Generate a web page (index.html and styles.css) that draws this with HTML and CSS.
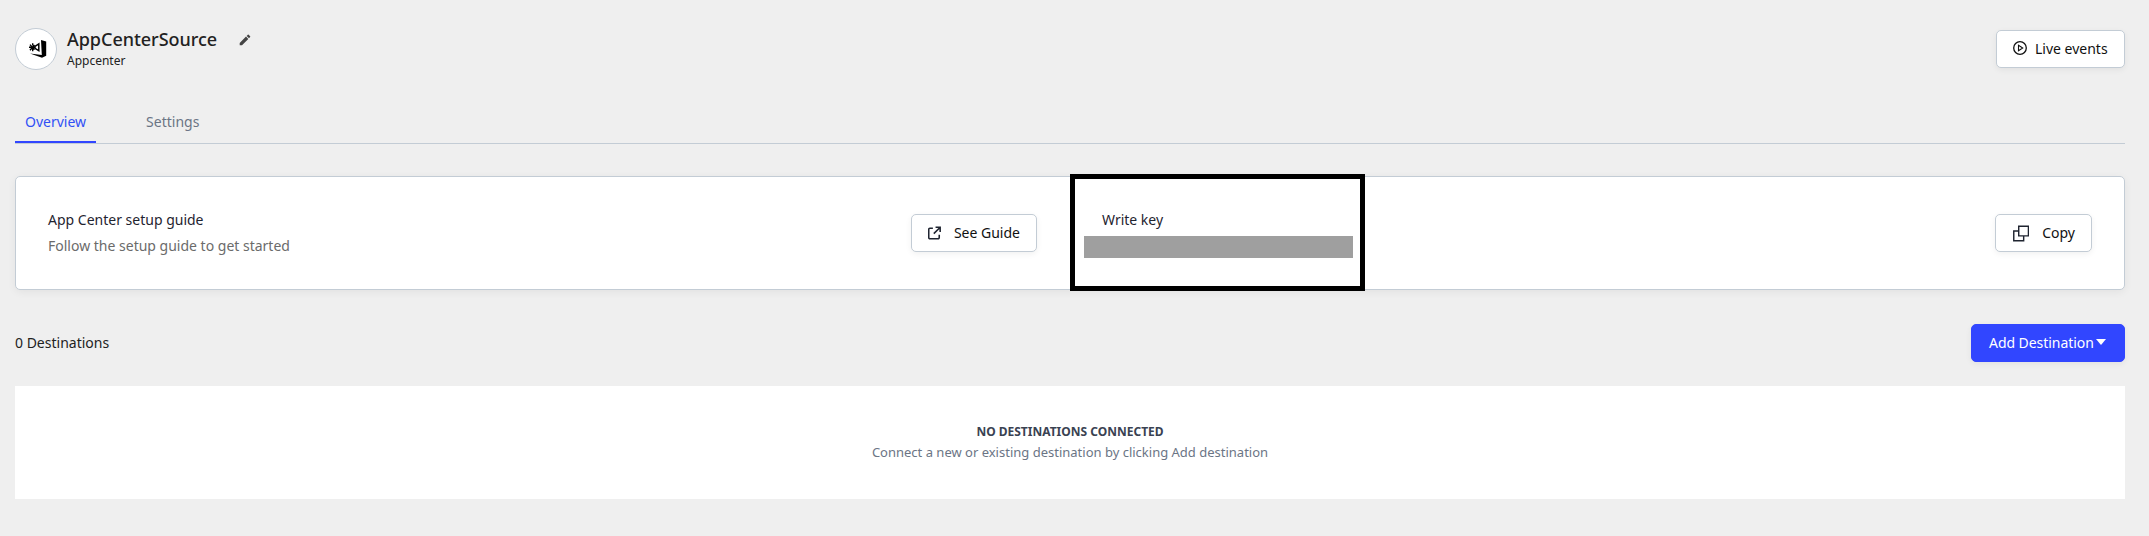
FILE: index.html
```html
<!DOCTYPE html>
<html lang="en">
<head>
<meta charset="utf-8">
<title>AppCenterSource</title>
<link rel="stylesheet" href="styles.css">
</head>
<body>
<main class="page">
  <header class="header">
    <div class="logo">
      <svg width="18" height="18" viewBox="0 0 18 18">
        <path d="M12 0 17.200 1.500V15.800L13 17.800 1 13.600 12.800 15z" fill="#000"/>
        <g fill="none" stroke="#000" stroke-width="1.500">
          <path d="M6 6.400 9.800 3.800V10.600L6 8.400z"/>
          <path d="M0 7.300h6M1 4.600 5.500 9.600M1 10.200 5.500 5M3.700 3.200v2.300M3.700 9v2.300" stroke-width="1.400"/>
        </g>
      </svg>
    </div>
    <div class="heading">
      <div class="title-row">
        <h1 class="title">AppCenterSource</h1>
        <svg class="pencil" width="12" height="12" viewBox="0 0 12 12"><path d="M.7 8.900v2.300H3l6.300-6.300L7 2.600zM7.700 1.900 10 4.200l1.100-1.100a.6.6 0 0 0 0-.9L9.700.8a.6.600 0 0 0-.9 0z" fill="#444"/></svg>
      </div>
      <p class="subtitle">Appcenter</p>
    </div>
    <button class="btn btn-live">
      <svg width="14" height="14" viewBox="0 0 14 14" fill="none" stroke="#111"><circle cx="7" cy="7" r="6.300" stroke-width="1.300"/><path d="M5.500 4.300v5.400L9.700 7z" stroke-width="1.100"/></svg>
      <span>Live events</span>
    </button>
  </header>

  <nav class="tabs">
    <a class="tab tab-active">Overview</a>
    <a class="tab">Settings</a>
  </nav>

  <section class="card">
    <div class="panel panel-guide">
      <div>
        <p class="panel-title">App Center setup guide</p>
        <p class="panel-text">Follow the setup guide to get started</p>
      </div>
      <button class="btn btn-guide">
        <svg width="14" height="14" viewBox="0 0 14 14" fill="none" stroke="#1f2430" stroke-width="1.700"><path d="M5.300 1.800H2a1.200 1.200 0 0 0-1.200 1.200v9A1.200 1.200 0 0 0 2 13.200h9a1.200 1.200 0 0 0 1.200-1.200V8.800M6.300 7.700 12.700 1.300M8.200.8h5v5"/></svg>
        <span>See Guide</span>
      </button>
    </div>
    <div class="panel">
      <div>
        <p class="panel-title">Write key</p>
        <div class="redacted"></div>
      </div>
      <button class="btn btn-copy">
        <svg width="17" height="17" viewBox="0 0 17 17" fill="none" stroke="#1f2430" stroke-width="1.500"><path d="M6 .8h10.200v10.200H6z"/><path d="M6 5.800H.8v10.400h10.400V11"/></svg>
        <span>Copy</span>
      </button>
      <div class="highlight"></div>
    </div>
  </section>

  <div class="toolbar">
    <span class="count">0 Destinations</span>
    <button class="btn btn-primary">
      <span>Add Destination</span>
      <svg width="10" height="6" viewBox="0 0 10 6"><path d="M0 0h10L5 6z" fill="#fff"/></svg>
    </button>
  </div>

  <section class="empty">
    <h2 class="empty-title">NO DESTINATIONS CONNECTED</h2>
    <p class="empty-text">Connect a new or existing destination by clicking Add destination</p>
  </section>
</main>
</body>
</html>
```
FILE: styles.css
```css
* { box-sizing: border-box; }

body {
  margin: 0;
  min-height: 536px;
  background: #efefef;
  color: #222;
  font: 14px/20px "Noto Sans", sans-serif;
}

h1, h2, p { margin: 0; }

.page { padding: 28px 24px 0 15px; }

.header {
  display: flex;
  align-items: center;
  height: 42px;
}

.logo {
  display: flex;
  align-items: center;
  justify-content: center;
  width: 42px;
  height: 42px;
  border: 1px solid #c3ccd5;
  border-radius: 50%;
  background: #fff;
}

.logo svg { margin-left: 3px; }

.heading { margin-left: 10px; }

.title-row {
  display: flex;
  align-items: center;
  gap: 22px;
}

.title {
  font-size: 18px;
  font-weight: 500;
  line-height: 22px;
  letter-spacing: -.04px;
  padding-bottom: 2px;
}

.subtitle {
  font-size: 12px;
  line-height: 18px;
}

.btn {
  display: flex;
  align-items: center;
  height: 38px;
  padding: 0 16px;
  border: 1px solid #c3ccd5;
  border-radius: 5px;
  background: #fff;
  box-shadow: 0 2px 6px rgba(0, 0, 0, .06);
  color: #111;
  font: inherit;
  white-space: nowrap;
}

.btn-live {
  width: 129px;
  margin-left: auto;
  gap: 8px;
}

.btn-live svg { margin-top: -2px; }

.btn-guide {
  width: 126px;
  gap: 13px;
}

.btn-copy {
  width: 97px;
  padding-left: 17px;
  gap: 13px;
}

.btn-primary {
  width: 154px;
  padding: 0 0 0 17px;
  gap: 2px;
  border-color: #3146ff;
  background: #3146ff;
  color: #fff;
  letter-spacing: -.05px;
}

.btn-primary svg { margin-top: -2px; }

.tabs {
  display: flex;
  gap: 40px;
  height: 44px;
  margin-top: 30px;
  border-bottom: 1px solid #c3ccd5;
}

.tab {
  height: 43px;
  padding: 12px 10px 0;
  color: #6b7585;
}

.tab-active {
  border-bottom: 2px solid #3146ff;
  color: #3151f5;
}

.card {
  display: grid;
  grid-template-columns: 1fr 1fr;
  height: 114px;
  margin-top: 32px;
  border: 1px solid #c3ccd5;
  border-radius: 5px;
  background: #fff;
  box-shadow: 0 2px 8px rgba(0, 0, 0, .06);
}

.panel {
  position: relative;
  display: flex;
  align-items: center;
  justify-content: space-between;
  padding: 0 32px;
}

.panel-guide { padding-right: 33px; }

.panel-title {
  margin-bottom: 6px;
  color: #1f2430;
}

.panel-text { color: #6b6b6b; }

.redacted {
  width: 269px;
  height: 22px;
  margin: 0 0 -2px -18px;
  background: #9f9f9f;
}

/* Callout frame around the write key */
.highlight {
  position: absolute;
  top: -3px;
  left: 0;
  width: 295px;
  height: 117px;
  border: 5px solid #000;
}

.toolbar {
  display: flex;
  align-items: center;
  justify-content: space-between;
  margin-top: 34px;
}

.empty {
  height: 113px;
  margin-top: 24px;
  padding-top: 37px;
  background: #fff;
  text-align: center;
}

.empty-title {
  color: #3a4252;
  font-size: 12px;
  font-weight: 700;
  line-height: 18px;
}

.empty-text {
  margin-top: 1px;
  color: #6b7585;
  font-size: 13px;
}
```
